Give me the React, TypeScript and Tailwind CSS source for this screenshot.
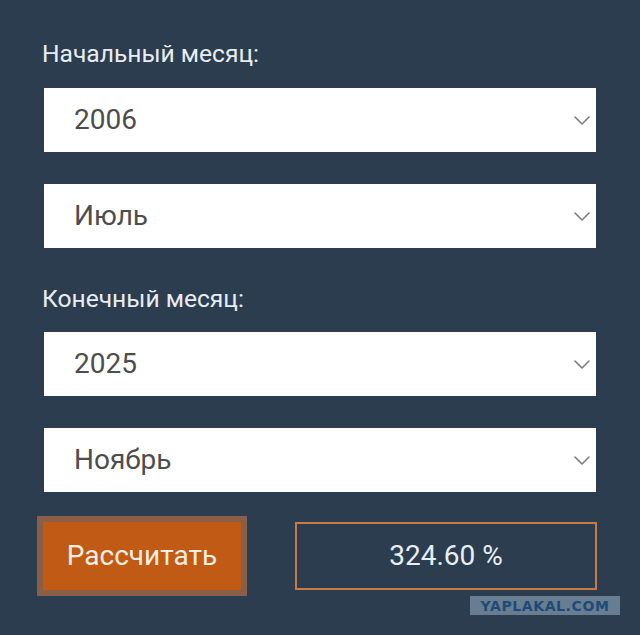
import React from "react";

const Chevron = () => (
  <svg width="16" height="9" viewBox="0 0 16 9" fill="none">
    <path d="M1 1 L8 8 L15 1" stroke="#7a7a7a" strokeWidth="1.5" strokeLinecap="round" strokeLinejoin="round" />
  </svg>
);

const Select = ({ value, className = "" }: { value: string; className?: string }) => (
  <div className={`flex h-[64px] w-[552px] items-center justify-between bg-white pl-[30px] pr-[6px] ${className}`}>
    <span className="text-[28px] leading-none text-[#4d4d4d]">{value}</span>
    <Chevron />
  </div>
);

export default function App() {
  return (
    <div
      className="relative h-[635px] w-[640px] overflow-hidden bg-[#2c3d50]"
      style={{ fontFamily: "Roboto, 'Noto Sans', sans-serif" }}
    >
      <div className="flex flex-col pl-[44px] pt-[40px]">
        <div className="-ml-[2px] text-[24.6px] leading-[28px] text-[#e8edf1]">Начальный месяц:</div>
        <Select value="2006" className="mt-[20px]" />
        <Select value="Июль" className="mt-[32px]" />
        <div className="-ml-[2px] mt-[37px] text-[24.6px] leading-[28px] text-[#e8edf1]">Конечный месяц:</div>
        <Select value="2025" className="mt-[19px]" />
        <Select value="Ноябрь" className="mt-[32px]" />
      </div>
      <div className="mt-[24px] flex items-center pl-[37px]">
        <div className="flex h-[80px] w-[210px] items-center justify-center border-[6px] border-[#8a5e47] bg-[#c15a15]">
          <span className="text-[28px] leading-none text-[#fcefe3]">Рассчитать</span>
        </div>
        <div className="ml-[48px] flex h-[68px] w-[302px] items-center justify-center border-2 border-[#c97a45]">
          <span className="text-[28px] leading-none text-[#e9eef2]">324.60 %</span>
        </div>
      </div>
      <div className="absolute left-[470px] top-[596px] flex h-[19px] w-[150px] items-center justify-center bg-[#687d91]">
        <span
          className="text-[14px] font-black leading-none tracking-[0.6px] text-[#1d4b77]"
          style={{ fontFamily: "'DejaVu Sans', sans-serif" }}
        >
          YAPLAKAL.COM
        </span>
      </div>
    </div>
  );
}
